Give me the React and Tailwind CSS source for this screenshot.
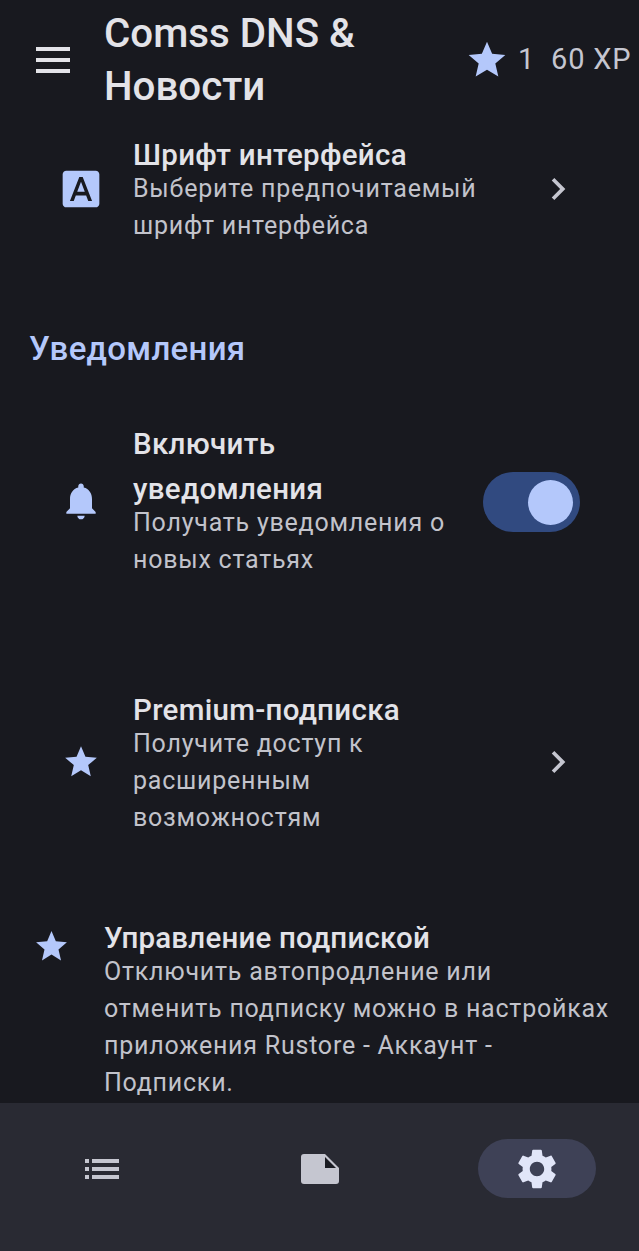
import React from 'react';

const STAR = "M12 17.27 18.18 21l-1.64-7.03L22 9.24l-7.19-.61L12 2 9.19 8.63 2 9.24l5.46 4.73L5.82 21z";
const BELL = "M12 22c1.1 0 2-.9 2-2h-4c0 1.1.9 2 2 2zm6-6v-5c0-3.07-1.63-5.64-4.5-6.32V4c0-.83-.67-1.5-1.5-1.5s-1.5.67-1.5 1.5v.68C7.64 5.36 6 7.92 6 11v5l-2 2v1h16v-1l-2-2z";
const FONT_ICON = "M9.93 13.5h4.14L12 7.98zM20 2H4c-1.1 0-2 .9-2 2v16c0 1.1.9 2 2 2h16c1.1 0 2-.9 2-2V4c0-1.1-.9-2-2-2zm-4.05 16.5l-1.14-3H9.17l-1.12 3H5.96l5.11-13h1.86l5.11 13h-2.09z";
const CHEVRON = "M10 6 8.59 7.41 13.17 12l-4.58 4.59L10 18l6-6z";
const GEAR = "M19.14 12.94c.04-.3.06-.61.06-.94 0-.32-.02-.64-.07-.94l2.03-1.58c.18-.14.23-.41.12-.61l-1.92-3.32c-.12-.22-.37-.29-.59-.22l-2.39.96c-.5-.38-1.03-.7-1.62-.94l-.36-2.54c-.04-.24-.24-.41-.48-.41h-3.84c-.24 0-.43.17-.47.41l-.36 2.54c-.59.24-1.13.57-1.62.94l-2.39-.96c-.22-.08-.47 0-.59.22L2.74 8.87c-.12.21-.08.47.12.61l2.03 1.58c-.05.3-.09.63-.09.94s.02.64.07.94l-2.03 1.58c-.18.14-.23.41-.12.61l1.92 3.32c.12.22.37.29.59.22l2.39-.96c.5.38 1.03.7 1.62.94l.36 2.54c.05.24.24.41.48.41h3.84c.24 0 .44-.17.47-.41l.36-2.54c.59-.24 1.13-.56 1.62-.94l2.39.96c.22.08.47 0 .59-.22l1.92-3.32c.12-.22.07-.47-.12-.61l-2.01-1.58zM12 15.6c-1.98 0-3.6-1.62-3.6-3.6s1.62-3.6 3.6-3.6 3.6 1.62 3.6 3.6-1.62 3.6-3.6 3.6z";

const Icon = ({ d, className }) => (
  <svg viewBox="0 0 24 24" className={className} fill="currentColor">
    <path d={d} />
  </svg>
);

const SettingRow = ({ icon, title, lines, right, className }) => (
  <div className={`flex items-center ${className}`}>
    <div className="w-[133px] shrink-0 flex justify-center pl-[29px]">
      {icon}
    </div>
    <div className="w-[351px] shrink-0">
      {title.map(t => (
        <div key={t} className="text-[29.5px] leading-[45px] font-medium text-[#e3e3e8] tracking-[0.3px]">
          {t}
        </div>
      ))}
      <div className="-mt-[8px]">
        {lines.map(l => (
          <div key={l} className="text-[25px] leading-[37px] text-[#c2c3cb] tracking-[0.77px] whitespace-nowrap">
            {l}
          </div>
        ))}
      </div>
    </div>
    {right}
  </div>
);

const Chevron = () => (
  <div className="w-[150px] flex justify-center pr-[1px] -ml-[1px]">
    <Icon d={CHEVRON} className="w-[44px] h-[44px] text-[#c5c6d0]" />
  </div>
);

export default function App() {
  return (
    <div className="w-[639px] h-[1251px] flex flex-col overflow-hidden bg-[#18191f] font-['Roboto',sans-serif]">

      {/* HEADER */}
      <div className="h-[113px] shrink-0 flex items-center pt-[6px]">
        <div className="w-[105px] shrink-0 flex justify-center">
          <div className="w-[34px] flex flex-col gap-[7px]">
            <div className="h-[4px] bg-[#e3e3e8]" />
            <div className="h-[4px] bg-[#e3e3e8]" />
            <div className="h-[4px] bg-[#e3e3e8]" />
          </div>
        </div>
        <div className="w-[362px] shrink-0 text-[40.3px] leading-[53px] font-medium text-[#e3e3e8] -ml-[1px]">
          <div>Comss DNS &amp;</div>
          <div>Новости</div>
        </div>
        <div className="flex items-center">
          <Icon d={STAR} className="w-[44px] h-[44px] text-[#b4c8fb] shrink-0 -ml-[1px]" />
          <span className="text-[29px] text-[#c5c6d0] whitespace-pre tracking-[0.8px] ml-[9px]">1  60 XP</span>
        </div>
      </div>

      {/* CONTENT */}
      <div className="flex-1 min-h-0 overflow-hidden">
        <SettingRow
          className="mt-[20px]"
          icon={<Icon d={FONT_ICON} className="w-[44px] h-[44px] text-[#b4c8fb]" />}
          title={["Шрифт интерфейса"]}
          lines={["Выберите предпочитаемый", "шрифт интерфейса"]}
          right={<Chevron />}
        />

        <div className="mt-[85px] pl-[29px] text-[33px] leading-[40px] font-medium text-[#b4c8fb] tracking-[0.3px]">
          Уведомления
        </div>

        <SettingRow
          className="mt-[53px]"
          icon={<Icon d={BELL} className="w-[44px] h-[44px] text-[#b4c8fb] mt-[1px]" />}
          title={["Включить", "уведомления"]}
          lines={["Получать уведомления о", "новых статьях"]}
          right={
            <div className="relative w-[97px] h-[60px] rounded-full bg-[#314a80] -ml-[1px] mt-[3px]">
              <div className="absolute right-[7px] top-[8px] w-[45px] h-[45px] rounded-full bg-[#b4c8fb]" />
            </div>
          }
        />

        <SettingRow
          className="mt-[110px]"
          icon={<Icon d={STAR} className="w-[38px] h-[38px] text-[#b4c8fb]" />}
          title={["Premium-подписка"]}
          lines={["Получите доступ к", "расширенным", "возможностям"]}
          right={<Chevron />}
        />

        {/* SUBSCRIPTION NOTE */}
        <div className="flex mt-[80px]">
          <div className="w-[104px] shrink-0 flex pl-[33px] pt-[12px]">
            <Icon d={STAR} className="w-[37px] h-[37px] text-[#b4c8fb]" />
          </div>
          <div>
            <div className="text-[29.5px] leading-[45px] font-medium text-[#e3e3e8] tracking-[0.2px]">
              Управление подпиской
            </div>
            <div className="-mt-[8px]">
              {[
                "Отключить автопродление или",
                "отменить подписку можно в настройках",
                "приложения Rustore - Аккаунт -",
                "Подписки."
              ].map(l => (
                <div key={l} className="text-[25px] leading-[37px] text-[#c2c3cb] tracking-[0.77px] whitespace-nowrap">
                  {l}
                </div>
              ))}
            </div>
          </div>
        </div>
      </div>

      {/* BOTTOM NAV */}
      <div className="h-[148px] shrink-0 bg-[#292a33] grid grid-cols-3 pt-[36px]">
        <div className="flex justify-center pt-[15px]">
          <svg viewBox="0 0 34 22" className="w-[34px] h-[22px] -ml-[9px] mt-[4px] text-[#c5c6d0]" fill="currentColor">
            <rect x="0" y="1" width="4" height="4" />
            <rect x="7" y="1" width="27" height="4" />
            <rect x="0" y="9" width="4" height="4" />
            <rect x="7" y="9" width="27" height="4" />
            <rect x="0" y="17" width="4" height="4" />
            <rect x="7" y="17" width="27" height="4" />
          </svg>
        </div>
        <div className="flex justify-center pt-[15px]">
          <svg viewBox="0 0 38 30" className="w-[38px] h-[30px] text-[#c5c6d0]" fill="currentColor">
            <path d="M3 0h21l14 14v13a3 3 0 0 1-3 3H3a3 3 0 0 1-3-3V3a3 3 0 0 1 3-3z" />
            <path d="M24 3v11h11z" fill="#1a1b22" />
          </svg>
        </div>
        <div className="flex justify-center">
          <div className="w-[118px] h-[59px] ml-[8px] rounded-full bg-[#3e4156] flex items-center justify-center">
            <Icon d={GEAR} className="w-[48px] h-[48px] text-[#e1e5f8]" />
          </div>
        </div>
      </div>

    </div>
  );
}
